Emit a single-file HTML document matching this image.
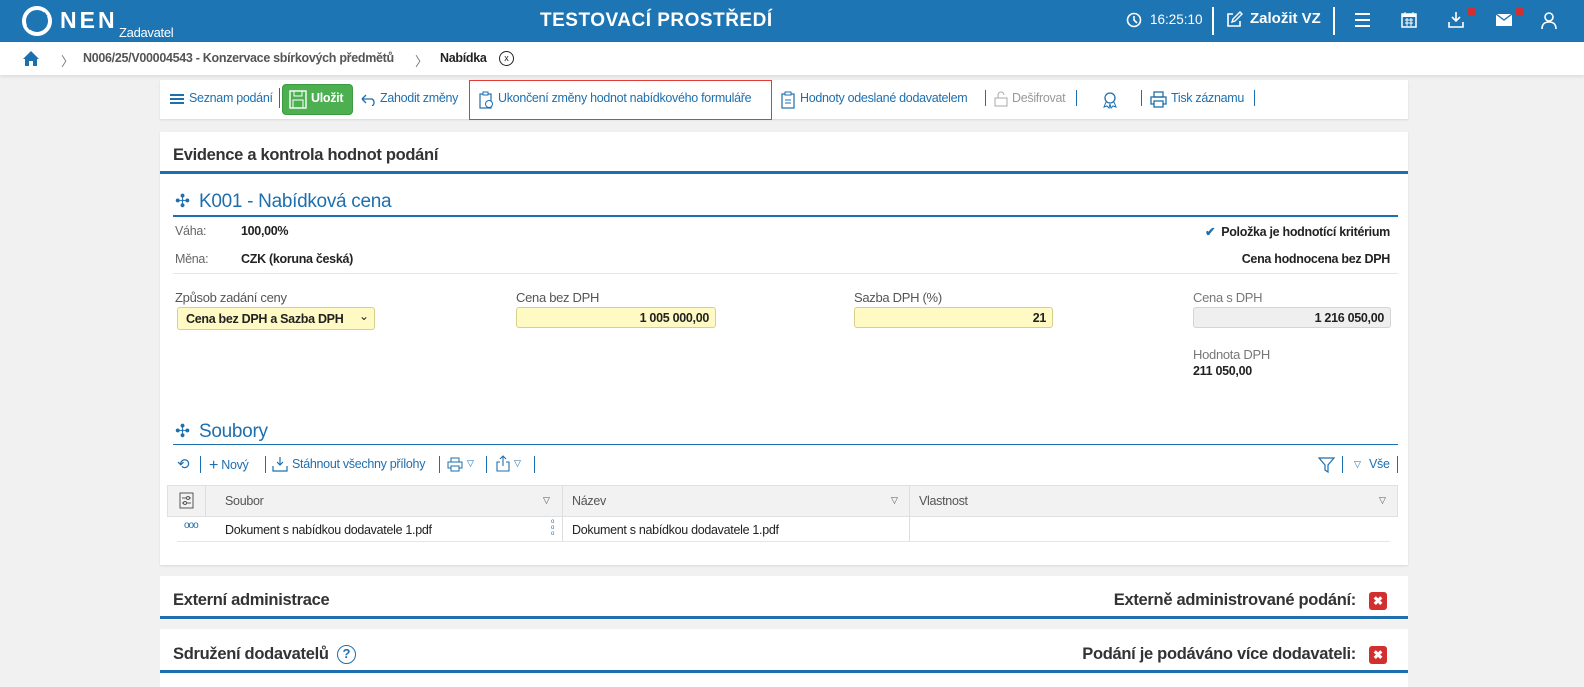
<!DOCTYPE html>
<html><head><meta charset="utf-8"><style>
*{box-sizing:border-box;margin:0;padding:0}
body{width:1584px;height:687px;overflow:hidden;background:#f1f1f1;font-family:"Liberation Sans",sans-serif;position:relative;color:#222}
.a{position:absolute;white-space:nowrap}
.c{font-size:12.5px;letter-spacing:-0.3px}
.blue{color:#1e6fae}
.sep{position:absolute;width:1px;background:#1e6fae}
</style></head><body>
<!-- header -->
<div class="a" style="left:0;top:0;width:1584px;height:42px;background:#1e75b3"></div>
<svg class="a" style="left:22px;top:6px" width="30" height="30" viewBox="0 0 30 30"><circle cx="15" cy="15" r="13" fill="none" stroke="#fff" stroke-width="4"/><path d="M6 22 L24 8" stroke="#1e75b3" stroke-width="5"/></svg>
<div class="a" style="left:60px;top:7px;color:#fff;font-weight:bold;font-size:23px;letter-spacing:3px">NEN</div>
<div class="a c" style="left:119px;top:25px;color:#fff;font-size:13px">Zadavatel</div>
<div class="a" style="left:540px;top:10px;color:#fff;font-weight:bold;font-size:19px;letter-spacing:0.5px">TESTOVACÍ PROSTŘEDÍ</div>
<svg class="a" style="left:1126px;top:12px" width="16" height="16"><circle cx="8" cy="8" r="6.5" fill="none" stroke="#fff" stroke-width="1.6"/><path d="M8 4v4l3 3" stroke="#fff" stroke-width="1.6" fill="none"/></svg>
<div class="a" style="left:1150px;top:12px;color:#fff;font-size:13.5px">16:25:10</div>
<div class="a" style="left:1212px;top:7px;width:2px;height:28px;background:#fff"></div>
<svg class="a" style="left:1225px;top:11px" width="18" height="18"><path d="M8 3H3v12h12v-5" fill="none" stroke="#fff" stroke-width="1.6"/><path d="M7 11l1-3 7-7 2 2-7 7z" fill="none" stroke="#fff" stroke-width="1.4"/></svg>
<div class="a" style="left:1250px;top:10px;color:#fff;font-size:15px;font-weight:bold">Založit VZ</div>
<div class="a" style="left:1333px;top:7px;width:2px;height:28px;background:#fff"></div>
<div class="a" style="left:1355px;top:13px;width:15px;height:2px;background:#fff;box-shadow:0 6px #fff,0 12px #fff"></div>
<svg class="a" style="left:1401px;top:11px" width="16" height="17"><rect x="1" y="3" width="14" height="13" fill="none" stroke="#fff" stroke-width="1.5"/><rect x="1" y="3" width="14" height="3" fill="#fff"/><path d="M4 1v3M12 1v3M4 9h8M4 12h8M6 7v8M10 7v8" stroke="#fff"/></svg>
<svg class="a" style="left:1447px;top:11px" width="18" height="18"><path d="M9 1v9M5 6l4 4 4-4M2 11v5h14v-5" fill="none" stroke="#fff" stroke-width="1.6"/></svg>
<div class="a" style="left:1467px;top:7px;width:9px;height:9px;border-radius:50%;background:#d32f2f"></div>
<svg class="a" style="left:1495px;top:13px" width="18" height="14"><rect x="1" y="1" width="16" height="12" fill="#fff"/><path d="M1 1l8 6 8-6" stroke="#1e75b3" stroke-width="1.4" fill="none"/></svg>
<div class="a" style="left:1515px;top:7px;width:9px;height:9px;border-radius:50%;background:#d32f2f"></div>
<svg class="a" style="left:1541px;top:11px" width="16" height="18"><circle cx="8" cy="6" r="4" fill="none" stroke="#fff" stroke-width="1.6"/><path d="M1 18c0-5 3-7 7-7s7 2 7 7" fill="none" stroke="#fff" stroke-width="1.6"/></svg>
<!-- breadcrumb -->
<div class="a" style="left:0;top:42px;width:1584px;height:33px;background:#fff;box-shadow:0 2px 3px rgba(0,0,0,.08)"></div>
<svg class="a" style="left:22px;top:50px" width="18" height="17"><path d="M9 1L1 9h2v7h4v-5h4v5h4V9h2z" fill="#1e6fae"/></svg>
<div class="a" style="left:61px;top:51px;color:#777;font-size:13px">〉</div>
<div class="a c" style="left:83px;top:51px;color:#555;font-weight:bold">N006/25/V00004543 - Konzervace sbírkových předmětů</div>
<div class="a" style="left:415px;top:51px;color:#777;font-size:13px">〉</div>
<div class="a c" style="left:440px;top:51px;font-weight:bold">Nabídka</div>
<div class="a" style="left:499px;top:51px;width:15px;height:15px;border:1.3px solid #222;border-radius:50%;font-size:9px;text-align:center;line-height:12px">x</div>
<!-- toolbar -->
<div class="a" style="left:160px;top:80px;width:1248px;height:39px;background:#fff;box-shadow:0 1px 2px rgba(0,0,0,.1)"></div>
<div class="a" style="left:170px;top:94px;width:14px;height:1.5px;background:#1e6fae;box-shadow:0 4px #1e6fae,0 8px #1e6fae"></div>
<div class="a c blue" style="left:189px;top:91px">Seznam podání</div>
<div class="sep" style="left:279px;top:88px;height:20px"></div>
<div class="a" style="left:282px;top:84px;width:71px;height:31px;background:#4caf50;border-radius:4px;border:1px solid #3d9a41"></div>
<svg class="a" style="left:289px;top:90px" width="18" height="19"><rect x="1" y="1" width="16" height="17" fill="none" stroke="#fff" stroke-width="1.4"/><rect x="5" y="1" width="8" height="5" fill="none" stroke="#fff"/><rect x="4" y="10" width="10" height="8" fill="none" stroke="#fff"/></svg>
<div class="a c" style="left:311px;top:91px;color:#fff;font-weight:bold">Uložit</div>
<svg class="a" style="left:360px;top:92px" width="18" height="14"><path d="M2 7h10a4 4 0 0 1 0 7M2 7l4-4M2 7l4 4" fill="none" stroke="#1e6fae" stroke-width="1.3"/></svg>
<div class="a c blue" style="left:380px;top:91px">Zahodit změny</div>
<div class="a" style="left:469px;top:80px;width:303px;height:40px;border:1px solid #e53935"></div>
<svg class="a" style="left:478px;top:91px" width="16" height="18"><rect x="2" y="3" width="11" height="14" fill="none" stroke="#1e6fae" stroke-width="1.2"/><rect x="5" y="1" width="5" height="3" fill="#fff" stroke="#1e6fae"/><circle cx="11" cy="13" r="3.5" fill="#fff" stroke="#1e6fae"/></svg>
<div class="a c blue" style="left:498px;top:91px">Ukončení změny hodnot nabídkového formuláře</div>
<svg class="a" style="left:780px;top:91px" width="16" height="18"><rect x="2" y="3" width="12" height="14" fill="none" stroke="#1e6fae" stroke-width="1.2"/><rect x="5" y="1" width="6" height="3" fill="#fff" stroke="#1e6fae"/><path d="M5 9h6M5 12h6" stroke="#1e6fae"/></svg>
<div class="a c blue" style="left:800px;top:91px">Hodnoty odeslané dodavatelem</div>
<div class="sep" style="left:985px;top:90px;height:16px"></div>
<svg class="a" style="left:993px;top:91px" width="16" height="16"><rect x="2" y="7" width="12" height="8" fill="none" stroke="#aaa"/><path d="M5 7V4a3 3 0 0 1 6 0" fill="none" stroke="#aaa"/></svg>
<div class="a c" style="left:1012px;top:91px;color:#999">Dešifrovat</div>
<div class="sep" style="left:1076px;top:90px;height:16px"></div>
<svg class="a" style="left:1101px;top:91px" width="18" height="18"><circle cx="9" cy="7" r="5" fill="none" stroke="#1e6fae" stroke-width="1.3"/><path d="M5 11l-2 5 3-1 2 2 1-4M13 11l2 5-3-1-2 2-1-4" fill="none" stroke="#1e6fae"/></svg>
<div class="sep" style="left:1141px;top:90px;height:16px"></div>
<svg class="a" style="left:1150px;top:91px" width="17" height="17"><rect x="4" y="1" width="9" height="5" fill="none" stroke="#1e6fae" stroke-width="1.3"/><rect x="1" y="6" width="15" height="7" fill="none" stroke="#1e6fae" stroke-width="1.3"/><rect x="4" y="10" width="9" height="6" fill="#fff" stroke="#1e6fae" stroke-width="1.3"/></svg>
<div class="a c blue" style="left:1171px;top:91px">Tisk záznamu</div>
<div class="sep" style="left:1254px;top:90px;height:16px"></div>
<!-- main card -->
<div class="a" style="left:160px;top:132px;width:1248px;height:433px;background:#fff;box-shadow:0 1px 2px rgba(0,0,0,.1)"></div>
<div class="a" style="left:173px;top:146px;font-size:16.5px;font-weight:bold;color:#333;letter-spacing:-0.3px">Evidence a kontrola hodnot podání</div>
<div class="a" style="left:160px;top:171px;width:1248px;height:3px;background:#1e6fae"></div>
<div class="a blue" style="left:175px;top:191px;font-size:18px">✣</div>
<div class="a blue" style="left:199px;top:191px;font-size:19px;letter-spacing:-0.3px">K001 - Nabídková cena</div>
<div class="a" style="left:173px;top:215px;width:1225px;height:2px;background:#1e6fae"></div>
<div class="a c" style="left:175px;top:224px;color:#666">Váha:</div>
<div class="a c" style="left:241px;top:224px;font-weight:bold">100,00%</div>
<div class="a c" style="left:175px;top:252px;color:#666">Měna:</div>
<div class="a c" style="left:241px;top:252px;font-weight:bold">CZK (koruna česká)</div>
<div class="a c" style="right:194px;top:224px;font-weight:bold"><span class="blue" style="margin-right:6px">✔</span>Položka je hodnotící kritérium</div>
<div class="a c" style="right:194px;top:252px;font-weight:bold">Cena hodnocena bez DPH</div>
<div class="a" style="left:173px;top:273px;width:1225px;height:1px;background:#e6e6e6"></div>
<div class="a c" style="left:175px;top:290px;color:#555;font-size:13px">Způsob zadání ceny</div>
<div class="a" style="left:177px;top:307px;width:198px;height:23px;background:#fff9c4;border:1px solid #d7cf8c;border-radius:3px"></div>
<div class="a c" style="left:186px;top:312px;font-weight:bold">Cena bez DPH a Sazba DPH</div>
<div class="a" style="left:359px;top:309px;font-size:12px">⌄</div>
<div class="a c" style="left:516px;top:290px;color:#555;font-size:13px">Cena bez DPH</div>
<div class="a" style="left:516px;top:307px;width:200px;height:21px;background:#fff9c4;border:1px solid #d7cf8c;border-radius:3px"></div>
<div class="a c" style="right:875px;top:311px;font-weight:bold">1 005 000,00</div>
<div class="a c" style="left:854px;top:290px;color:#555;font-size:13px">Sazba DPH (%)</div>
<div class="a" style="left:854px;top:307px;width:199px;height:21px;background:#fff9c4;border:1px solid #d7cf8c;border-radius:3px"></div>
<div class="a c" style="right:538px;top:311px;font-weight:bold">21</div>
<div class="a c" style="left:1193px;top:290px;color:#777;font-size:13px">Cena s DPH</div>
<div class="a" style="left:1193px;top:307px;width:198px;height:21px;background:#efefef;border:1px solid #d4d4d4;border-radius:3px"></div>
<div class="a c" style="right:200px;top:311px;font-weight:bold">1 216 050,00</div>
<div class="a c" style="left:1193px;top:347px;color:#777;font-size:13px">Hodnota DPH</div>
<div class="a c" style="left:1193px;top:364px;font-weight:bold">211 050,00</div>
<div class="a blue" style="left:175px;top:421px;font-size:18px">✣</div>
<div class="a blue" style="left:199px;top:421px;font-size:19px;letter-spacing:-0.3px">Soubory</div>
<div class="a" style="left:173px;top:444px;width:1225px;height:1px;background:#1e6fae"></div>
<div class="a blue" style="left:177px;top:455px;font-size:15px">⟲</div>
<div class="sep" style="left:200px;top:456px;height:17px"></div>
<div class="a c blue" style="left:209px;top:457px"><span style="font-size:16px;vertical-align:-1px">+</span> Nový</div>
<div class="sep" style="left:265px;top:456px;height:17px"></div>
<svg class="a" style="left:272px;top:456px" width="16" height="16"><path d="M8 1v8M5 6l3 3 3-3M1 10v5h14v-5" fill="none" stroke="#1e6fae" stroke-width="1.2"/></svg>
<div class="a c blue" style="left:292px;top:457px">Stáhnout všechny přílohy</div>
<div class="sep" style="left:439px;top:456px;height:17px"></div>
<svg class="a" style="left:447px;top:457px" width="16" height="15"><rect x="4" y="1" width="8" height="4" fill="none" stroke="#1e6fae"/><rect x="1" y="5" width="14" height="6" fill="none" stroke="#1e6fae"/><rect x="4" y="9" width="8" height="5" fill="#fff" stroke="#1e6fae"/></svg>
<div class="a blue" style="left:467px;top:458px;font-size:9px">▽</div>
<div class="sep" style="left:486px;top:456px;height:17px"></div>
<svg class="a" style="left:495px;top:455px" width="16" height="17"><path d="M8 1v10M5 4l3-3 3 3M5 7H2v9h12V7h-3" fill="none" stroke="#1e6fae" stroke-width="1.1"/></svg>
<div class="a blue" style="left:514px;top:458px;font-size:9px">▽</div>
<div class="sep" style="left:534px;top:456px;height:17px"></div>
<svg class="a" style="left:1318px;top:456px" width="17" height="17"><path d="M1 2h15l-6 7v7l-3-2V9z" fill="none" stroke="#1e6fae" stroke-width="1.2"/></svg>
<div class="sep" style="left:1342px;top:456px;height:17px"></div>
<div class="a blue" style="left:1354px;top:459px;font-size:9px">▽</div>
<div class="a c blue" style="left:1369px;top:457px">Vše</div>
<div class="sep" style="left:1397px;top:456px;height:17px"></div>
<!-- table -->
<div class="a" style="left:167px;top:485px;width:1231px;height:32px;background:#f2f2f2;border:1px solid #e0e0e0"></div>
<div class="a" style="left:205px;top:485px;width:1px;height:32px;background:#ddd"></div>
<div class="a" style="left:562px;top:485px;width:1px;height:57px;background:#ddd"></div>
<div class="a" style="left:909px;top:485px;width:1px;height:57px;background:#ddd"></div>
<svg class="a" style="left:179px;top:492px" width="15" height="17"><rect x="1" y="1" width="13" height="15" fill="none" stroke="#555"/><path d="M3 6h9M3 11h9" stroke="#555"/><circle cx="9" cy="6" r="1.5" fill="#fff" stroke="#555"/><circle cx="6" cy="11" r="1.5" fill="#fff" stroke="#555"/></svg>
<div class="a c" style="left:225px;top:494px;color:#555">Soubor</div>
<div class="a" style="left:543px;top:495px;font-size:9px;color:#555">▽</div>
<div class="a c" style="left:572px;top:494px;color:#555">Název</div>
<div class="a" style="left:891px;top:495px;font-size:9px;color:#555">▽</div>
<div class="a c" style="left:919px;top:494px;color:#555">Vlastnost</div>
<div class="a" style="left:1379px;top:495px;font-size:9px;color:#555">▽</div>
<div class="a blue" style="left:184px;top:520px;font-size:10px;letter-spacing:-1px">ooo</div>
<div class="a c" style="left:225px;top:523px">Dokument s nabídkou dodavatele 1.pdf</div>
<div class="a blue" style="left:551px;top:519px;font-size:6px;line-height:6px">o<br>o<br>o</div>
<div class="a c" style="left:572px;top:523px">Dokument s nabídkou dodavatele 1.pdf</div>
<div class="a" style="left:177px;top:541px;width:1213px;height:1px;background:#e6e6e6"></div>
<!-- externí -->
<div class="a" style="left:160px;top:576px;width:1248px;height:44px;background:#fff"></div>
<div class="a" style="left:173px;top:591px;font-size:16.5px;font-weight:bold;color:#333;letter-spacing:-0.3px">Externí administrace</div>
<div class="a" style="right:228px;top:591px;font-size:16.5px;font-weight:bold;color:#333;letter-spacing:-0.3px">Externě administrované podání:</div>
<div class="a" style="left:1369px;top:592px;width:18px;height:18px;background:#d32f2f;border-radius:3px;color:#fff;font-size:12px;font-weight:bold;text-align:center;line-height:18px">✖</div>
<div class="a" style="left:160px;top:616px;width:1248px;height:3px;background:#1e6fae"></div>
<div class="a" style="left:160px;top:629px;width:1248px;height:58px;background:#fff"></div>
<div class="a" style="left:173px;top:645px;font-size:16.5px;font-weight:bold;color:#333;letter-spacing:-0.3px">Sdružení dodavatelů</div>
<div class="a blue" style="left:337px;top:645px;width:19px;height:19px;border:1.5px solid #1e6fae;border-radius:50%;font-size:13px;font-weight:bold;text-align:center;line-height:16px">?</div>
<div class="a" style="right:228px;top:645px;font-size:16.5px;font-weight:bold;color:#333;letter-spacing:-0.3px">Podání je podáváno více dodavateli:</div>
<div class="a" style="left:1369px;top:646px;width:18px;height:18px;background:#d32f2f;border-radius:3px;color:#fff;font-size:12px;font-weight:bold;text-align:center;line-height:18px">✖</div>
<div class="a" style="left:160px;top:670px;width:1248px;height:3px;background:#1e6fae"></div>
</body></html>
